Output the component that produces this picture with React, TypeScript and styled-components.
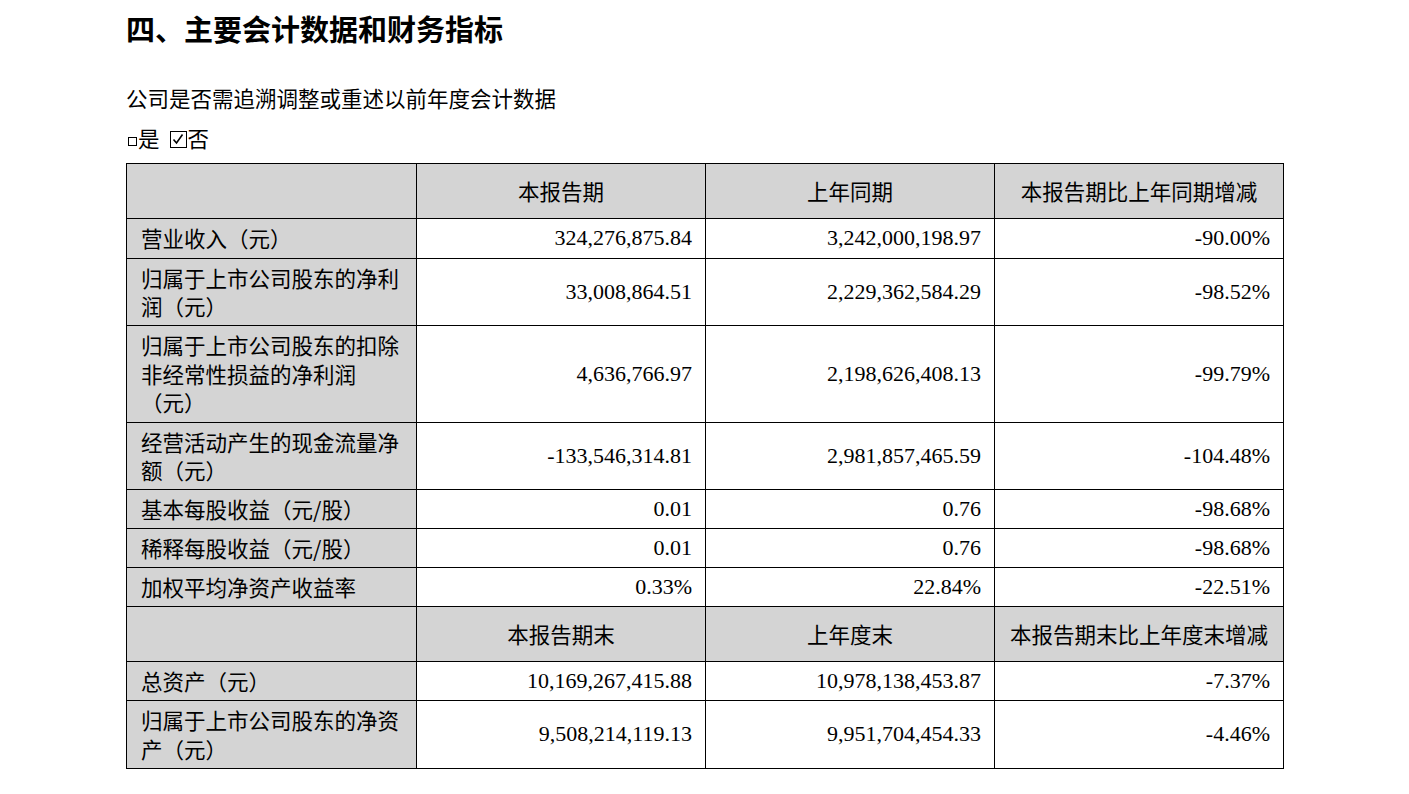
import React from "react";
import styled, { createGlobalStyle } from "styled-components";

const Global = createGlobalStyle`
  html, body { margin: 0; padding: 0; background: #fff; }
  body {
    font-family: "Liberation Serif", "Noto Sans CJK SC", serif;
    color: #000;
  }
`;

const Page = styled.div`
  padding: 8px 0 0 126px;
  width: 1158px;
`;

const Title = styled.h1`
  margin: 0;
  font-family: "Noto Sans CJK SC", sans-serif;
  font-weight: 700;
  font-size: 29px;
  line-height: 40px;
`;

const Para = styled.p<{ $mt: number }>`
  margin: 0;
  font-family: "Noto Sans CJK SC", sans-serif;
  font-size: 21.5px;
  line-height: 30px;
  margin-top: ${(p) => p.$mt}px;
  display: flex;
  align-items: center;
`;

const SmallBox = styled.span`
  display: inline-block;
  width: 7px;
  height: 7px;
  border: 1px solid #000;
  margin: 6px 1px 0 2px;
`;

const CheckBox = styled.span`
  display: inline-flex;
  width: 15px;
  height: 15px;
  border: 1.5px solid #000;
  margin: 2px 1px 0 10px;
  align-items: center;
  justify-content: center;
`;

const Table = styled.table`
  margin-top: 10px;
  border-collapse: collapse;
  table-layout: fixed;
  width: 1158px;
`;

const Tr = styled.tr<{ $h: number }>`
  height: ${(p) => p.$h}px;
`;

const Cell = styled.td<{ $head?: boolean; $label?: boolean; $center?: boolean }>`
  border: 1.5px solid #000;
  background: ${(p) => (p.$head || p.$label ? "#d4d4d4" : "#fff")};
  font-family: ${(p) =>
    p.$head || p.$label ? '"Noto Sans CJK SC", sans-serif' : '"Liberation Serif", serif'};
  font-size: ${(p) => (p.$head || p.$label ? "21.5px" : "22px")};
  line-height: 28.5px;
  padding: ${(p) => (p.$label ? "0 12px 0 14px" : "0 13px")};
  text-align: ${(p) => (p.$center ? "center" : p.$label ? "left" : "right")};
  vertical-align: middle;
  color: #000;
`;

type Row = [string, string, string, string, number];

const group1: Row[] = [
  ["营业收入（元）", "324,276,875.84", "3,242,000,198.97", "-90.00%", 40],
  ["归属于上市公司股东的净利润（元）", "33,008,864.51", "2,229,362,584.29", "-98.52%", 67],
  ["归属于上市公司股东的扣除非经常性损益的净利润（元）", "4,636,766.97", "2,198,626,408.13", "-99.79%", 97],
  ["经营活动产生的现金流量净额（元）", "-133,546,314.81", "2,981,857,465.59", "-104.48%", 67],
  ["基本每股收益（元/股）", "0.01", "0.76", "-98.68%", 39],
  ["稀释每股收益（元/股）", "0.01", "0.76", "-98.68%", 39],
  ["加权平均净资产收益率", "0.33%", "22.84%", "-22.51%", 39],
];

const group2: Row[] = [
  ["总资产（元）", "10,169,267,415.88", "10,978,138,453.87", "-7.37%", 39],
  ["归属于上市公司股东的净资产（元）", "9,508,214,119.13", "9,951,704,454.33", "-4.46%", 68],
];

const HeadRow = ({ cols }: { cols: string[] }) => (
  <Tr $h={55}>
    <Cell $head />
    {cols.map((c) => (
      <Cell $head $center key={c}>
        {c}
      </Cell>
    ))}
  </Tr>
);

const DataRow = ({ row }: { row: Row }) => (
  <Tr $h={row[4]}>
    <Cell $label>{row[0]}</Cell>
    <Cell>{row[1]}</Cell>
    <Cell>{row[2]}</Cell>
    <Cell>{row[3]}</Cell>
  </Tr>
);

export default function App() {
  return (
    <>
      <Global />
      <Page>
        <Title>四、主要会计数据和财务指标</Title>
        <Para $mt={35}>公司是否需追溯调整或重述以前年度会计数据</Para>
        <Para $mt={10}>
          <SmallBox />
          是
          <CheckBox>
            <svg width="12" height="12" viewBox="0 0 12 12">
              <polyline points="1.5,6.5 4.5,10 10.5,1.5" fill="none" stroke="#000" strokeWidth="1.6" />
            </svg>
          </CheckBox>
          否
        </Para>
        <Table>
          <colgroup>
            <col style={{ width: 290 }} />
            <col style={{ width: 289 }} />
            <col style={{ width: 289 }} />
            <col style={{ width: 289 }} />
          </colgroup>
          <tbody>
            <HeadRow cols={["本报告期", "上年同期", "本报告期比上年同期增减"]} />
            {group1.map((r) => (
              <DataRow row={r} key={r[0]} />
            ))}
            <HeadRow cols={["本报告期末", "上年度末", "本报告期末比上年度末增减"]} />
            {group2.map((r) => (
              <DataRow row={r} key={r[0]} />
            ))}
          </tbody>
        </Table>
      </Page>
    </>
  );
}
